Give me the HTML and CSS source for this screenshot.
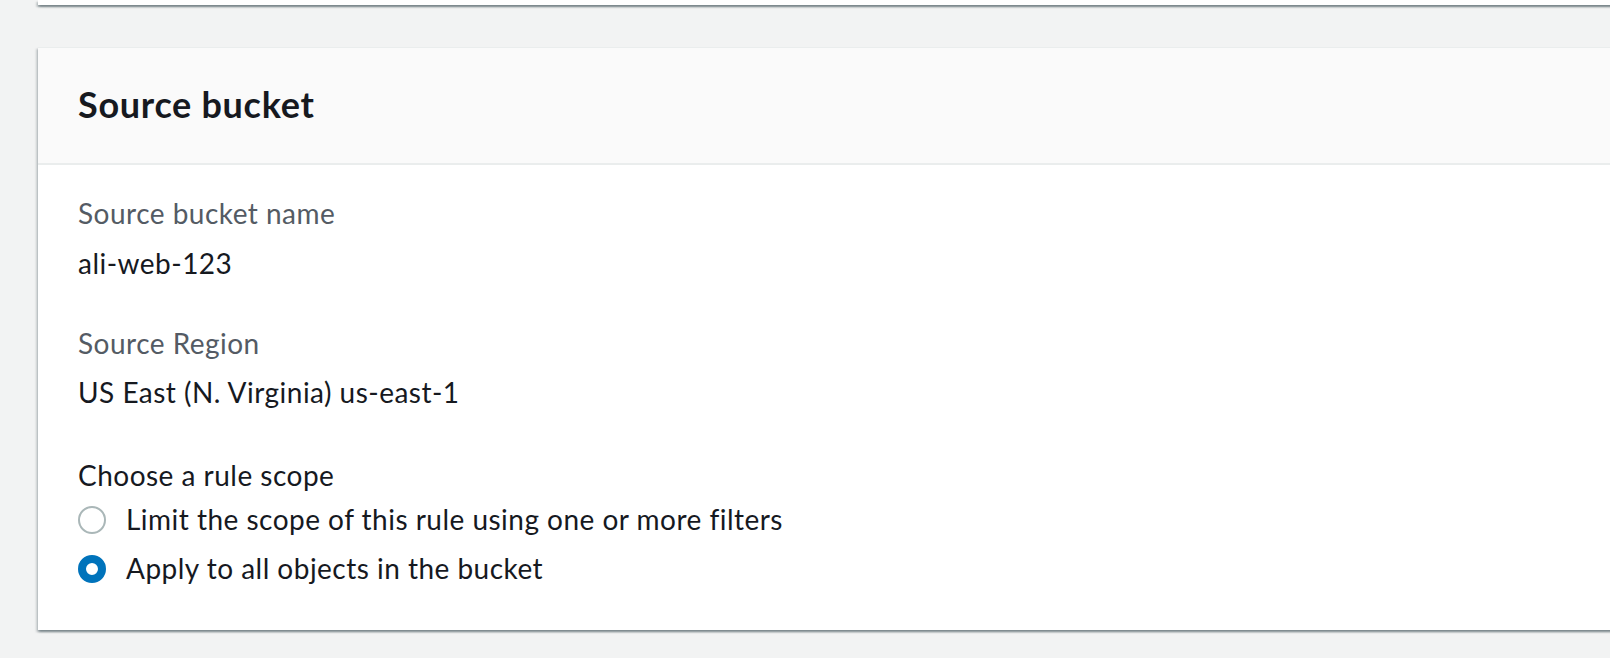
FILE: index.html
```html
<!DOCTYPE html>
<html lang="en">
<head>
<meta charset="utf-8">
<title>Source bucket</title>
<link rel="stylesheet" href="styles.css">
</head>
<body>
<div class="page">
  <div class="card card-prev"></div>
  <section class="card">
    <header class="card-header">
      <h2 class="card-title">Source bucket</h2>
    </header>
    <div class="card-body">
      <div class="kv">
        <div class="kv-label">Source bucket name</div>
        <div class="kv-value">ali-web-123</div>
      </div>
      <div class="kv kv-next">
        <div class="kv-label">Source Region</div>
        <div class="kv-value">US East (N. Virginia) us-east-1</div>
      </div>
      <fieldset class="field">
        <legend class="field-label">Choose a rule scope</legend>
        <label class="radio-row">
          <span class="radio"></span>
          <span class="radio-text">Limit the scope of this rule using one or more filters</span>
        </label>
        <label class="radio-row">
          <span class="radio radio-checked"></span>
          <span class="radio-text">Apply to all objects in the bucket</span>
        </label>
      </fieldset>
    </div>
  </section>
</div>
</body>
</html>
```

FILE: styles.css
```css
html, body {
  margin: 0;
  padding: 0;
  overflow: hidden;
  background: #f2f3f3;
}

body {
  font-family: "Lato", "Liberation Sans", sans-serif;
  color: #16191f;
  width: 1610px;
  height: 658px;
}

.page {
  display: flex;
  flex-direction: column;
  gap: 42px;
  padding-left: 38px;
}

.card {
  width: 1640px;
  background: #ffffff;
  box-shadow: 0 2px 2px 0 rgba(0, 28, 36, 0.3),
              2px 2px 2px 0 rgba(0, 28, 36, 0.15),
              -2px 2px 2px 0 rgba(0, 28, 36, 0.15);
  border-top: 1px solid #eaeded;
  box-sizing: border-box;
}

.card-prev {
  height: 5px;
  border-top: none;
}

.card-header {
  background: #fafafa;
  border-bottom: 2px solid #eaeded;
  padding: 34px 40px 37px 40px;
}

.card-title {
  margin: 0;
  font-size: 36px;
  line-height: 44px;
  font-weight: 700;
  letter-spacing: 0.7px;
  color: #16191f;
}

.card-body {
  padding: 26px 40px 35px 40px;
  font-size: 28px;
  line-height: 44px;
  letter-spacing: 0.48px;
}

.kv-label {
  color: #545b64;
}

.kv-value {
  margin-top: 6px;
  color: #16191f;
}

.kv-next {
  margin-top: 36px;
}

.kv-next .kv-value {
  margin-top: 5px;
}

.field {
  border: none;
  margin: 39px 0 0 0;
  padding: 0;
  min-width: 0;
}

.field-label {
  padding: 0;
  display: block;
  float: left;
  width: 100%;
  color: #16191f;
}

.radio-row {
  clear: both;
  display: flex;
  align-items: flex-start;
  gap: 20px;
  padding-bottom: 5px;
}

.field-label + .radio-row {
  margin-top: -2px;
}

.radio {
  flex: none;
  box-sizing: border-box;
  width: 28px;
  height: 28px;
  margin-top: 9px;
  border-radius: 50%;
  border: 2px solid #aab7b8;
  background: #ffffff;
}

.radio-checked {
  border: 8px solid #0073bb;
}
```
